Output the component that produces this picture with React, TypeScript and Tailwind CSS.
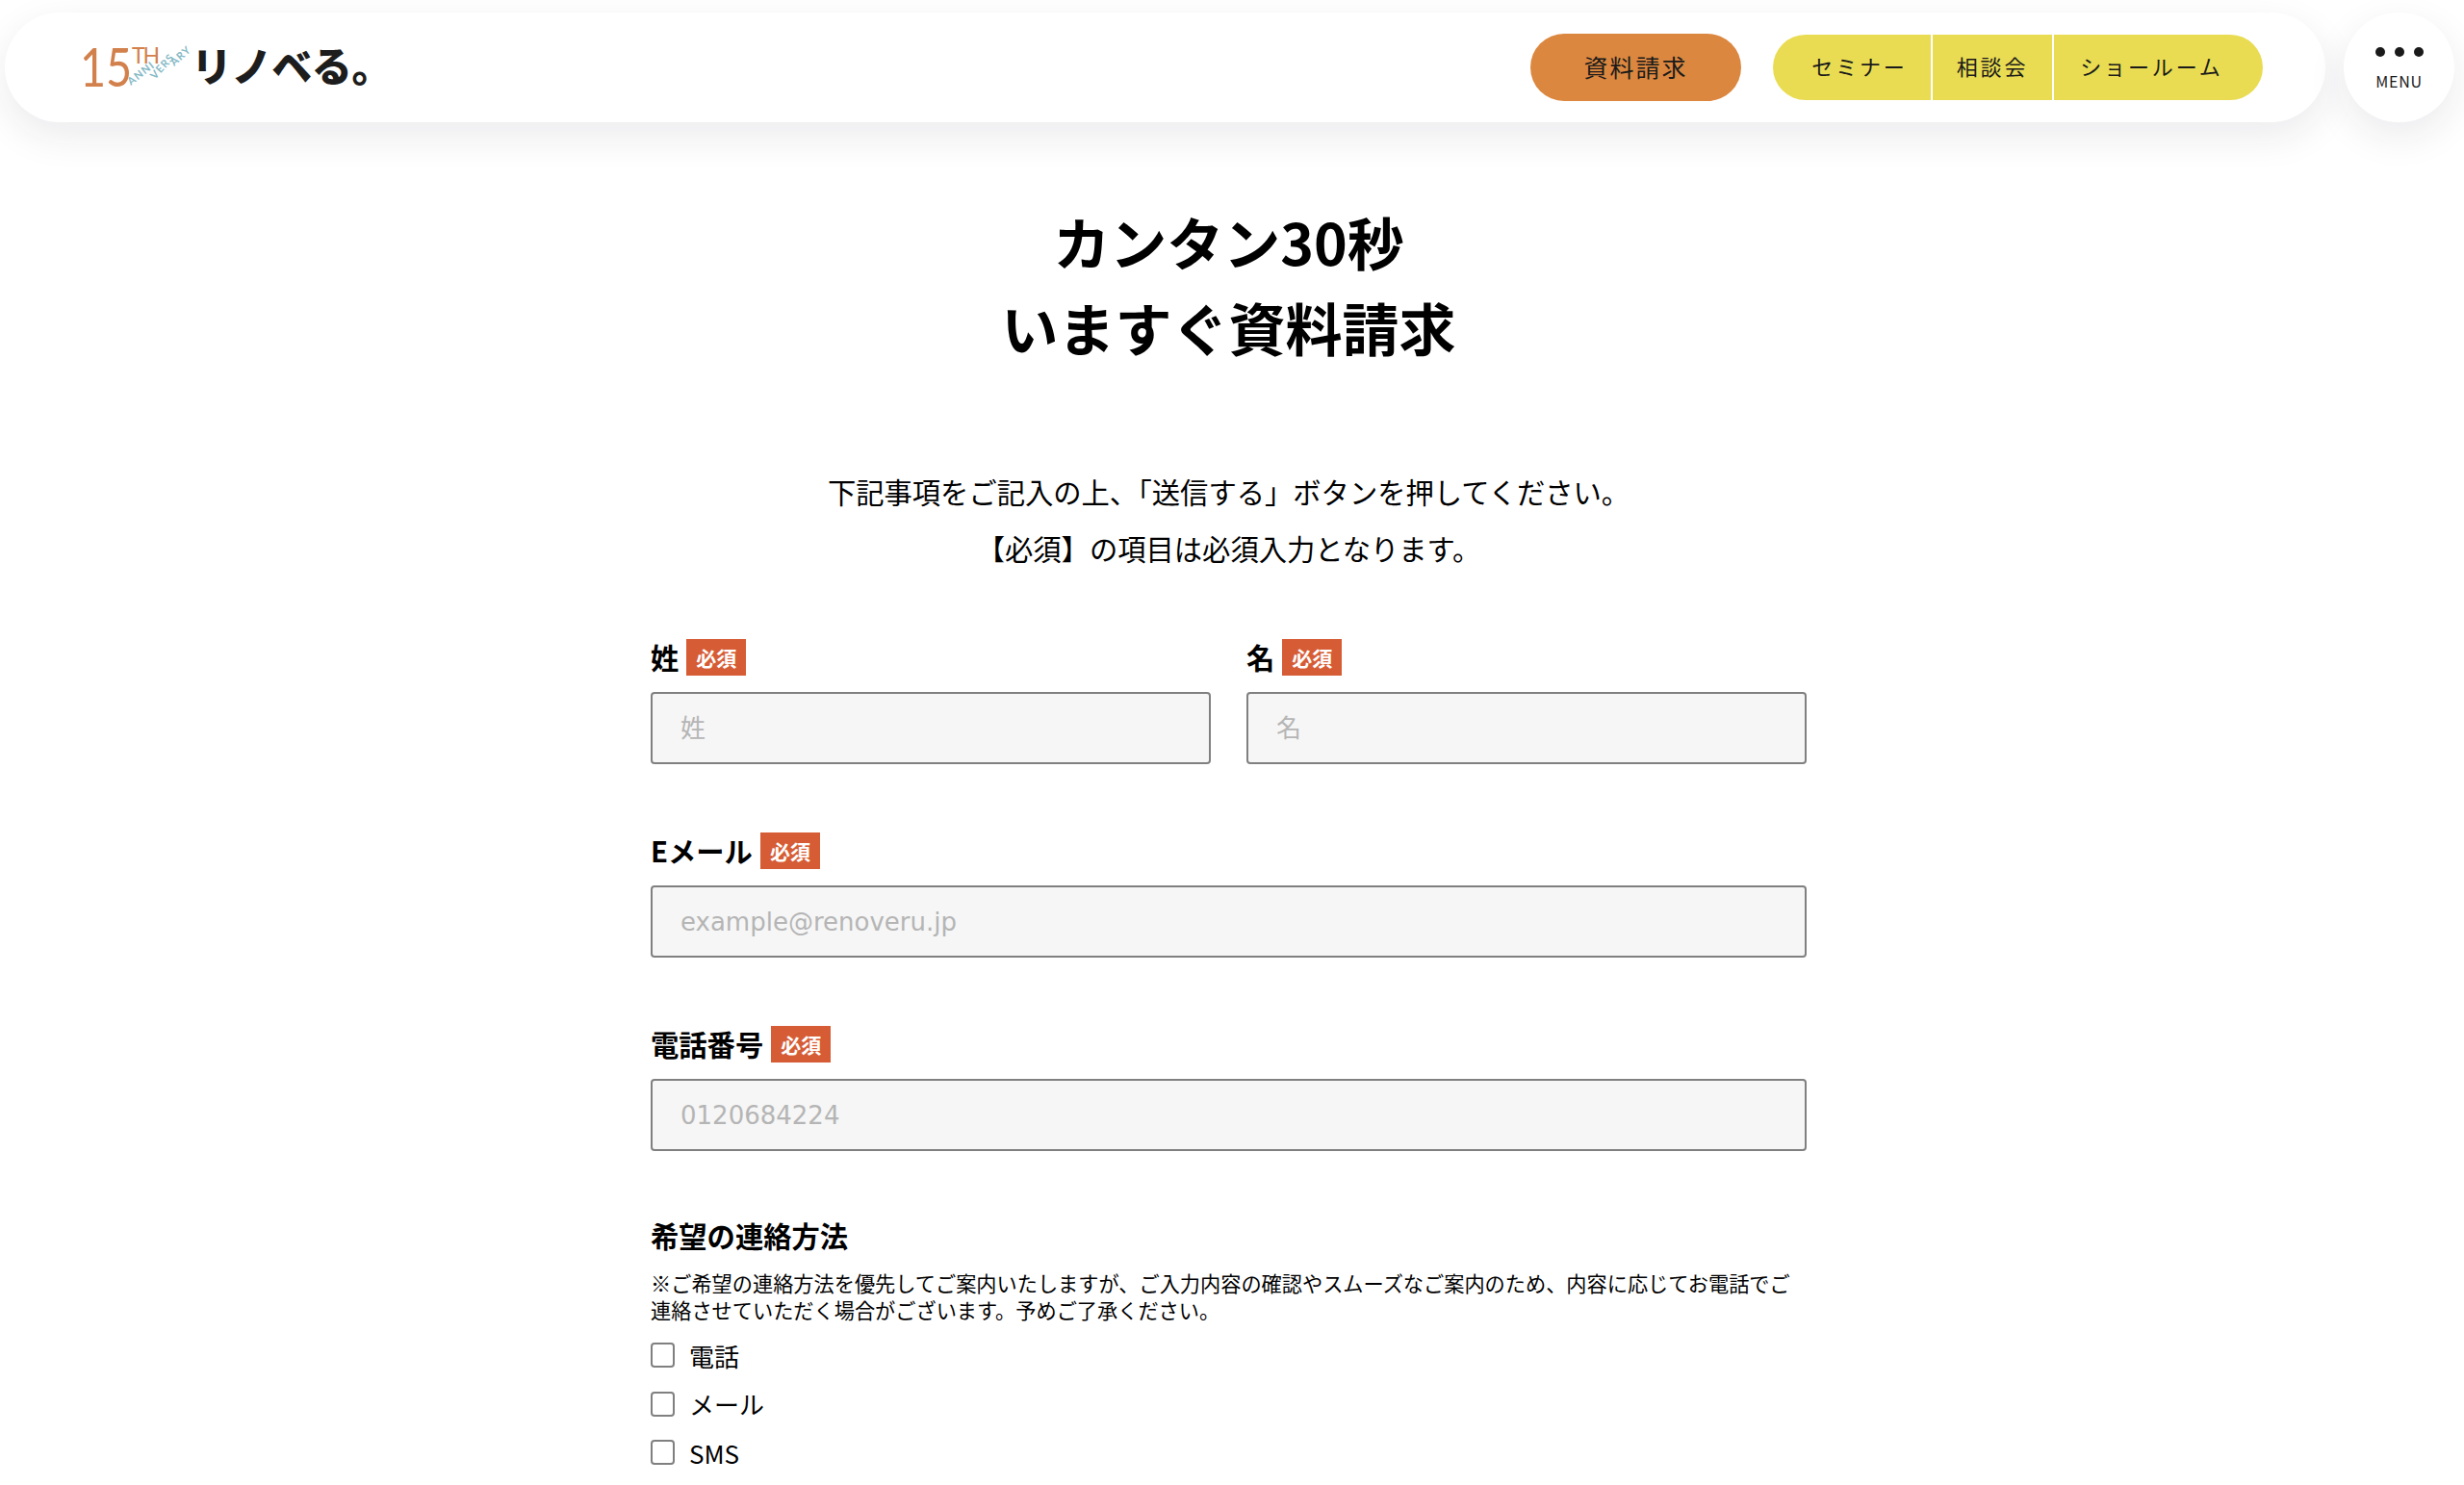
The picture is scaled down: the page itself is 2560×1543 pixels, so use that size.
const cjk = "font-['Noto_Sans_CJK_JP','Noto_Sans',sans-serif]";

const Required = () => (
  <span className="flex h-[38px] w-[62px] items-center justify-center bg-[#d65c35] text-[21px] leading-none font-bold text-white">
    必須
  </span>
);

const FieldLabel = ({ label }: { label: string }) => (
  <div className="flex h-[38px] items-center gap-[8px]">
    <span className="text-[29.3px] leading-none font-bold text-black">{label}</span>
    <Required />
  </div>
);

const TextField = ({ label, placeholder }: { label: string; placeholder: string }) => (
  <div className="flex-1">
    <FieldLabel label={label} />
    <input
      placeholder={placeholder}
      className="mt-[17px] block h-[75px] w-full rounded-[4px] border-2 border-[#808080] bg-[#f6f6f6] px-[29px] font-['DejaVu_Sans','Noto_Sans_CJK_JP',sans-serif] text-[26px] outline-none placeholder:text-[#b5b5b5]"
    />
  </div>
);

const Logo = () => (
  <svg width="310" height="70" viewBox="0 0 310 70" className="block">
    <text transform="translate(-3 55) scale(0.82 1)" fontFamily="Lato" fontWeight="400" fontSize="57" fill="#d2814c">15</text>
    <text x="51" y="31" fontFamily="Lato" fontWeight="400" fontSize="23" fill="#d2814c" letterSpacing="-2">TH</text>
    <g fontFamily="Lato" fontWeight="700" fontSize="11" fill="#86b9c6">
      <text transform="translate(50 54) rotate(-38)" letterSpacing="1.2">ANNI</text>
      <text transform="translate(75 48) rotate(-48)" letterSpacing="1">VERS</text>
      <text transform="translate(95 34) rotate(-42)" letterSpacing="1">ARY</text>
    </g>
    <text x="113" y="50" fontFamily="Noto Sans CJK JP" fontWeight="900" fontSize="42" fill="#1d1d1d" letterSpacing="-0.4">リノベる。</text>
  </svg>
);

const contactOptions = ['電話', 'メール', 'SMS'];

export default function App() {
  return (
    <div className={`${cjk} h-[1543px] overflow-hidden bg-white text-black`}>
      <header className="flex h-[140px] items-start gap-[19px] pt-[13px] pr-[10px] pl-[5px]">
        <div className="flex h-[114px] flex-1 items-center rounded-[57px] bg-white pr-[65px] pl-[81px] shadow-[0_14px_40px_rgba(30,30,60,0.09)]">
          <Logo />
          <a className="ml-auto flex h-[70px] w-[219px] items-center justify-center rounded-[35px] bg-[#dc873f] text-[25px] tracking-[0.08em] text-[#1a1a1a]">
            資料請求
          </a>
          <nav className="ml-[33px] flex h-[68px] w-[509px] overflow-hidden rounded-[34px] bg-[#e9dc52] text-[22px] leading-[64px] tracking-[0.13em] text-[#1a1a1a]">
            <a className="flex w-[166px] items-start justify-center border-r-2 border-white pl-[16px]">セミナー</a>
            <a className="flex w-[126px] items-start justify-center border-r-2 border-white">相談会</a>
            <a className="flex flex-1 items-start justify-center pr-[14px]">ショールーム</a>
          </nav>
        </div>
        <button className="flex h-[114px] w-[115px] flex-col items-center justify-center rounded-full bg-white shadow-[0_14px_40px_rgba(30,30,60,0.09)]">
          <span className="flex gap-[10px]">
            <i className="block h-[10px] w-[10px] rounded-full bg-[#1a1a1a]" />
            <i className="block h-[10px] w-[10px] rounded-full bg-[#1a1a1a]" />
            <i className="block h-[10px] w-[10px] rounded-full bg-[#1a1a1a]" />
          </span>
          <span className="mt-[17px] text-[16px] leading-none tracking-[0.05em] text-[#1a1a1a]">MENU</span>
        </button>
      </header>

      <main className="mx-auto w-[1208px] pr-[7px]">
        <h1 className="mt-[66px] text-center text-[59px] leading-[89px] font-bold">
          カンタン30秒
          <br />
          いますぐ資料請求
        </h1>
        <div className="mt-[97px] text-center text-[29.3px] leading-[59px]">
          <p>下記事項をご記入の上、「送信する」ボタンを押してください。</p>
          <p>【必須】の項目は必須入力となります。</p>
        </div>

        <div className="mt-[65px] flex gap-[37px]">
          <TextField label="姓" placeholder="姓" />
          <TextField label="名" placeholder="名" />
        </div>
        <div className="mt-[71px] flex">
          <TextField label="Eメール" placeholder="example@renoveru.jp" />
        </div>
        <div className="mt-[71px] flex">
          <TextField label="電話番号" placeholder="0120684224" />
        </div>

        <h2 className="mt-[68px] text-[29.3px] leading-[38px] font-bold">希望の連絡方法</h2>
        <p className="mt-[17px] text-[21.2px] leading-[28px]">
          ※ご希望の連絡方法を優先してご案内いたしますが、ご入力内容の確認やスムーズなご案内のため、内容に応じてお電話でご
          <br />
          連絡させていただく場合がございます。予めご了承ください。
        </p>
        <ul className="mt-[8px] flex flex-col">
          {contactOptions.map((option) => (
            <li key={option} className="flex h-[50.5px] items-center gap-[15px] text-[26px]">
              <span className="h-[26px] w-[25px] rounded-[4px] border-2 border-[#808080] bg-white" />
              {option}
            </li>
          ))}
        </ul>
      </main>
    </div>
  );
}
